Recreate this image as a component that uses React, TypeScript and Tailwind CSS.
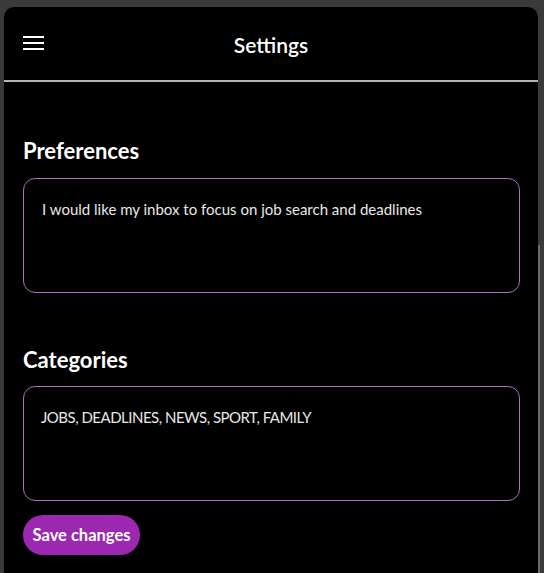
export default function App() {
  return (
    <div className="flex h-[573px] w-[544px] bg-[#3a3a3a] pt-[7px] pl-[4px] font-['Lato',sans-serif]">
      <section className="flex w-[534px] flex-col rounded-t-[10px] bg-black">
        <header className="relative flex h-[75px] shrink-0 items-center justify-center border-b-2 border-[#b4b4b4]">
          <button className="absolute left-[19px] top-[29px] flex w-[21px] flex-col gap-[4px]" aria-label="Menu">
            <span className="h-[2px] w-full bg-white" />
            <span className="h-[2px] w-full bg-white" />
            <span className="h-[2px] w-full bg-white" />
          </button>
          <h1 className="mt-[2px] text-[21px] font-semibold text-white">Settings</h1>
        </header>

        <div className="flex flex-col pl-[19px] pr-[18px] pt-[55px]">
          <h2 className="text-[22px] font-bold leading-[28px] text-white">Preferences</h2>
          <textarea
            defaultValue="I would like my inbox to focus on job search and deadlines"
            className="mt-[13px] h-[115px] w-[497px] resize-none rounded-[12px] border border-[#b06ac0] bg-black px-[18px] pt-[18px] text-[15px] leading-[24px] text-[#e8e8e8] outline-none"
          />

          <h2 className="mt-[53px] text-[22px] font-bold leading-[28px] text-white">Categories</h2>
          <textarea
            defaultValue="JOBS, DEADLINES, NEWS, SPORT, FAMILY"
            className="mt-[12px] h-[115px] w-[497px] resize-none rounded-[12px] border border-[#b06ac0] bg-black pl-[17px] pr-[18px] pt-[18px] text-[15px] leading-[24px] tracking-[-0.5px] text-[#e8e8e8] outline-none"
          />

          <button className="mt-[14px] h-[40px] w-[117px] rounded-full bg-[#9c27b0] text-[16.5px] font-bold text-white">
            Save changes
          </button>
        </div>
      </section>
      <div className="flex w-[6px] flex-col">
        <div className="mt-[238px] h-full w-[2px] bg-[#6a6a6a]" />
      </div>
    </div>
  );
}
